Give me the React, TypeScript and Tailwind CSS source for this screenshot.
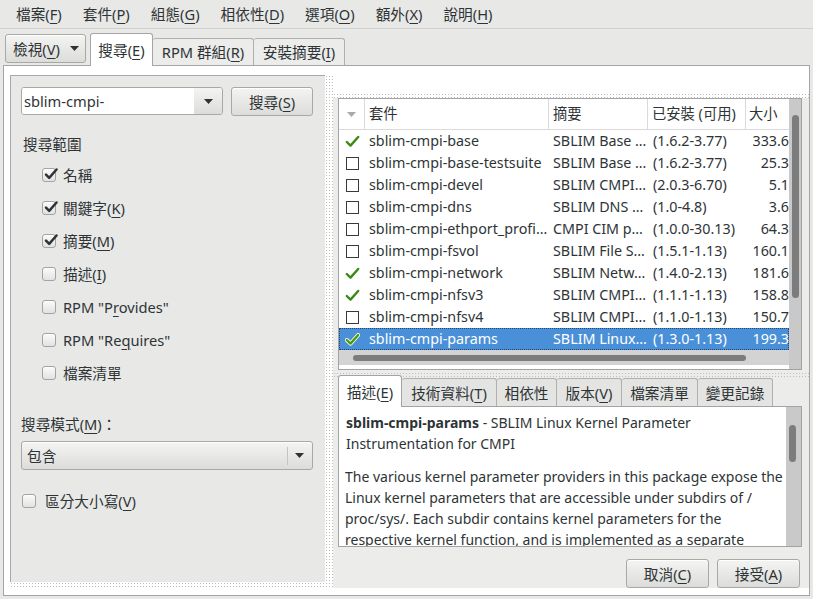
import * as React from "react";

// mnemonic: "檔案" + "F" -> 檔案(F) with the letter underlined
function Mn({ t, k }: { t: string; k?: string }) {
  return (
    <span>
      {t}
      {k && (
        <>
          (<span className="underline decoration-1 underline-offset-[3px]">{k}</span>)
        </>
      )}
    </span>
  );
}

const dots =
  "bg-[radial-gradient(circle,#bdbdbd_0.6px,transparent_0.9px)] bg-[length:3px_3px]";

function DownArrow({ color = "#2e3436" }: { color?: string }) {
  return (
    <svg width="9" height="5" viewBox="0 0 9 5">
      <path d="M0 0 H9 L4.5 5 Z" fill={color} />
    </svg>
  );
}

function CheckBox({ on }: { on?: boolean }) {
  return (
    <div className="relative size-[14px] shrink-0 rounded-[3px] border border-[#a3a3a3] bg-gradient-to-b from-[#fbfbfb] to-[#e2e2e2] shadow-[inset_0_1px_0_#fff]">
      {on && (
        <svg
          className="absolute left-[1px] top-[-2px]"
          width="14"
          height="14"
          viewBox="0 0 14 14"
        >
          <path
            d="M2 7.6 L5.2 10.8 L12.5 2.5"
            fill="none"
            stroke="#2e3436"
            strokeWidth="2.5"
            strokeLinecap="round"
            strokeLinejoin="round"
          />
        </svg>
      )}
    </div>
  );
}

function GreenCheck({ sel }: { sel?: boolean }) {
  return (
    <svg width="15" height="13" viewBox="0 0 15 13">
      {sel && (
        <path
          d="M1.8 7 L5.5 10.6 L13.2 2"
          fill="none"
          stroke="#ffffff"
          strokeWidth="4"
          strokeLinecap="round"
          strokeLinejoin="round"
        />
      )}
      <path
        d="M1.8 7 L5.5 10.6 L13.2 2"
        fill="none"
        stroke={sel ? "#4e9a06" : "#3b8a16"}
        strokeWidth="2.4"
        strokeLinecap="round"
        strokeLinejoin="round"
      />
    </svg>
  );
}

function Btn({ children, className = "" }: { children: React.ReactNode; className?: string }) {
  return (
    <div
      className={
        "flex h-[29px] items-center rounded-[3px] border border-[#a8a8a5] bg-gradient-to-b from-[#f4f4f3] to-[#dcdcda] shadow-[inset_0_1px_0_#fff] " +
        className
      }
    >
      {children}
    </div>
  );
}

const menus: [string, string][] = [
  ["檔案", "F"],
  ["套件", "P"],
  ["組態", "G"],
  ["相依性", "D"],
  ["選項", "O"],
  ["額外", "X"],
  ["說明", "H"],
];

const scopes: { t: string; k?: string; on?: boolean }[] = [
  { t: "名稱", on: true },
  { t: "關鍵字", k: "K", on: true },
  { t: "摘要", k: "M", on: true },
  { t: "描述", k: "I" },
];

const rows = [
  { n: "sblim-cmpi-base", s: "SBLIM Base …", v: "(1.6.2-3.77)", z: "333.6", ok: true },
  { n: "sblim-cmpi-base-testsuite", s: "SBLIM Base …", v: "(1.6.2-3.77)", z: "25.3" },
  { n: "sblim-cmpi-devel", s: "SBLIM CMPI…", v: "(2.0.3-6.70)", z: "5.1" },
  { n: "sblim-cmpi-dns", s: "SBLIM DNS …", v: "(1.0-4.8)", z: "3.6" },
  { n: "sblim-cmpi-ethport_profi…", s: "CMPI CIM p…", v: "(1.0.0-30.13)", z: "64.3" },
  { n: "sblim-cmpi-fsvol", s: "SBLIM File S…", v: "(1.5.1-1.13)", z: "160.1" },
  { n: "sblim-cmpi-network", s: "SBLIM Netw…", v: "(1.4.0-2.13)", z: "181.6", ok: true },
  { n: "sblim-cmpi-nfsv3", s: "SBLIM CMPI…", v: "(1.1.1-1.13)", z: "158.8", ok: true },
  { n: "sblim-cmpi-nfsv4", s: "SBLIM CMPI…", v: "(1.1.0-1.13)", z: "150.7" },
  { n: "sblim-cmpi-params", s: "SBLIM Linux…", v: "(1.3.0-1.13)", z: "199.3", ok: true, sel: true },
];

const detailTabs: { t: string; k?: string; w: string }[] = [
  { t: "技術資料", k: "T", w: "w-[95px]" },
  { t: "相依性", w: "w-[60px]" },
  { t: "版本", k: "V", w: "w-[65px]" },
  { t: "檔案清單", w: "w-[76px]" },
  { t: "變更記錄", w: "w-[75px]" },
];

export default function App() {
  return (
    <div className="h-[599px] w-[813px] overflow-hidden bg-[#e8e8e7] font-['Noto_Sans','Noto_Sans_CJK_TC',sans-serif] text-[14.67px] leading-[20px] text-[#2e3436]">
      {/* menubar */}
      <div className="flex h-[29px] items-center gap-[21px] border-b border-[#cfcfcd] pl-[16px]">
        {menus.map(([t, k]) => (
          <Mn key={k} t={t} k={k} />
        ))}
      </div>

      {/* view button + tabs */}
      <div className="flex h-[36px] items-end pl-[5px]">
        <Btn className="mb-[2px] w-[81px] justify-center gap-[10px] pl-[1px]">
          <Mn t="檢視" k="V" />
          <DownArrow />
        </Btn>
        <div className="relative z-10 -mb-px ml-[4px] flex h-[33px] w-[63px] items-center justify-center rounded-t-[3px] border border-b-0 border-[#a5a5a5] bg-white">
          <Mn t="搜尋" k="E" />
        </div>
        <div className="flex h-[27px] w-[101px] items-center justify-center rounded-t-[3px] border border-b-0 border-l-0 border-[#b0b0ae] bg-[#ececeb]">
          <Mn t="RPM 群組" k="R" />
        </div>
        <div className="flex h-[27px] w-[91px] items-center justify-center rounded-t-[3px] border border-b-0 border-l-0 border-[#b0b0ae] bg-[#ececeb]">
          <Mn t="安裝摘要" k="I" />
        </div>
      </div>

      {/* notebook page */}
      <div className="mx-[3px] flex h-[531px] border border-[#a5a5a5] bg-white pl-[6px] pt-[9px]">
        {/* left pane */}
        <div className="flex w-[315px] shrink-0 flex-col">
          <div className="flex h-[507px] flex-col border-l border-t border-[#a8a8a8] bg-[#e8e8e7] pl-[10px] pt-[11px]">
            <div className="flex">
              <div className="flex h-[28px] w-[202px] overflow-hidden rounded-[3px] border border-[#a8a8a5]">
                <div className="flex flex-1 items-center bg-white pl-[2px]">sblim-cmpi-</div>
                <div className="flex w-[28px] items-center justify-center bg-gradient-to-b from-[#f4f4f3] to-[#dcdcda]">
                  <DownArrow />
                </div>
              </div>
              <Btn className="ml-[8px] h-[28px] w-[82px] justify-center">
                <Mn t="搜尋" k="S" />
              </Btn>
            </div>

            <div className="mt-[18px] pl-[2px]">搜尋範圍</div>
            <div className="mt-[4px] flex flex-col">
              {scopes.map((s) => (
                <div key={s.t} className="flex h-[33px] items-center gap-[7px] pl-[21px]">
                  <CheckBox on={s.on} />
                  <Mn t={s.t} k={s.k} />
                </div>
              ))}
              <div className="flex h-[33px] items-center gap-[7px] pl-[21px]">
                <CheckBox />
                <span>
                  RPM "P<span className="underline decoration-1 underline-offset-[3px]">r</span>ovides"
                </span>
              </div>
              <div className="flex h-[33px] items-center gap-[7px] pl-[21px]">
                <CheckBox />
                <span>
                  RPM "Re<span className="underline decoration-1 underline-offset-[3px]">q</span>uires"
                </span>
              </div>
              <div className="flex h-[33px] items-center gap-[7px] pl-[21px]">
                <CheckBox />
                <span>檔案清單</span>
              </div>
            </div>

            <div className="mt-[25px]">
              <Mn t="搜尋模式" k="M" />：
            </div>
            <Btn className="mt-[7px] h-[28px] w-[292px] justify-between pl-[5px] pr-[8px]">
              <span>包含</span>
              <div className="flex items-center gap-[7px]">
                <div className="h-[18px] w-px bg-[#c4c4c2]" />
                <DownArrow />
              </div>
            </Btn>

            <div className="mt-[20px] flex h-[22px] items-center gap-[9px] pl-[1px]">
              <CheckBox />
              <Mn t="區分大小寫" k="V" />
            </div>
          </div>
          <div className={"h-[6px] " + dots} />
        </div>

        {/* pane handle */}
        <div className={"h-[513px] w-[8px] shrink-0 " + dots} />

        {/* right pane */}
        <div className="flex min-w-0 flex-1 flex-col">
          <div className="h-[18px]" />
          <div className={"h-[5px] " + dots} />
          <div className="flex h-[490px] flex-col bg-[#ececeb] pl-[5px] pr-[7px]">
            {/* package list */}
            <div className="flex h-[272px] border border-[#a3a3a3] bg-white text-[14.3px]">
              <div className="flex w-[450px] shrink-0 flex-col overflow-hidden">
                <div className="flex h-[31px] shrink-0 border-b border-[#dadada] text-[#2e3436]">
                  <div className="flex w-[26px] shrink-0 items-center justify-center border-r border-[#dadada]">
                    <DownArrow color="#a9a9a9" />
                  </div>
                  <div className="flex w-[184px] shrink-0 items-center border-r border-[#dadada] pl-[4px]">套件</div>
                  <div className="flex w-[99px] shrink-0 items-center border-r border-[#dadada] pl-[4px]">摘要</div>
                  <div className="flex w-[98px] shrink-0 items-center border-r border-[#dadada] pl-[4px]">已安裝 (可用)</div>
                  <div className="flex w-[43px] shrink-0 items-center pl-[3px]">大小</div>
                </div>
                {rows.map((r) => (
                  <div
                    key={r.n}
                    className={
                      "flex h-[22px] shrink-0 items-center whitespace-nowrap " +
                      (r.sel ? "border border-dotted border-[#23466e] bg-[#4a90d9] text-white" : "")
                    }
                  >
                    <div className={"flex shrink-0 items-center justify-center " + (r.sel ? "w-[25px]" : "w-[26px]")}>
                      {r.ok ? (
                        <GreenCheck sel={r.sel} />
                      ) : (
                        <div className="size-[13px] border border-[#3a3a3a] bg-white" />
                      )}
                    </div>
                    <div className="w-[184px] shrink-0 overflow-hidden pl-[4px]">{r.n}</div>
                    <div className="w-[99px] shrink-0 overflow-hidden pl-[4px]">{r.s}</div>
                    <div className="w-[98px] shrink-0 overflow-hidden pl-[5px]">{r.v}</div>
                    <div className="w-[43px] shrink-0 text-right">{r.z}</div>
                  </div>
                ))}
                <div className="flex h-[15px] shrink-0 items-center bg-[#d3d3d3] pl-[14px]">
                  <div className="h-[6px] w-[393px] rounded-full bg-[#7c7c7c]" />
                </div>
              </div>
              <div className="flex flex-1 flex-col bg-[#c9c9c9] pl-[3px] pt-[16px]">
                <div className="h-[183px] w-[7px] rounded-full bg-[#7c7c7c]" />
              </div>
            </div>

            <div className={"-ml-[5px] -mr-[7px] mt-[2px] h-[5px] " + dots} />

            {/* details tabs */}
            <div className="flex h-[29px] items-end">
              <div className="relative z-10 -mb-px flex h-[32px] w-[64px] items-center justify-center rounded-t-[3px] border border-b-0 border-[#a3a3a3] bg-white">
                <Mn t="描述" k="E" />
              </div>
              {detailTabs.map((d) => (
                <div
                  key={d.t}
                  className={
                    "flex h-[28px] items-center justify-center rounded-t-[3px] border border-b-0 border-l-0 border-[#b0b0ae] bg-[#e4e4e3] " +
                    d.w
                  }
                >
                  <Mn t={d.t} k={d.k} />
                </div>
              ))}
            </div>

            {/* description */}
            <div className="flex h-[141px] overflow-hidden border border-[#a3a3a3] bg-white text-[14px]">
              <div className="min-w-0 flex-1 overflow-hidden whitespace-nowrap pl-[6px] pt-[5px] leading-[21px]">
                <div className="pl-[1px]">
                  <span className="font-bold">sblim-cmpi-params</span> - SBLIM Linux Kernel Parameter
                </div>
                <div className="pl-[1px]">Instrumentation for CMPI</div>
                <div className="mt-[12px]">The various kernel parameter providers in this package expose the</div>
                <div>Linux kernel parameters that are accessible under subdirs of /</div>
                <div>proc/sys/. Each subdir contains kernel parameters for the</div>
                <div>respective kernel function, and is implemented as a separate</div>
              </div>
              <div className="w-[15px] shrink-0 bg-[#c9c9c9] pl-[3px] pt-[18px]">
                <div className="h-[37px] w-[7px] rounded-full bg-[#7c7c7c]" />
              </div>
            </div>

            <div className="mt-[12px] flex justify-end gap-[8px] pr-[2px]">
              <Btn className="w-[83px] justify-center">
                <Mn t="取消" k="C" />
              </Btn>
              <Btn className="w-[83px] justify-center">
                <Mn t="接受" k="A" />
              </Btn>
            </div>
          </div>
        </div>
      </div>
    </div>
  );
}
